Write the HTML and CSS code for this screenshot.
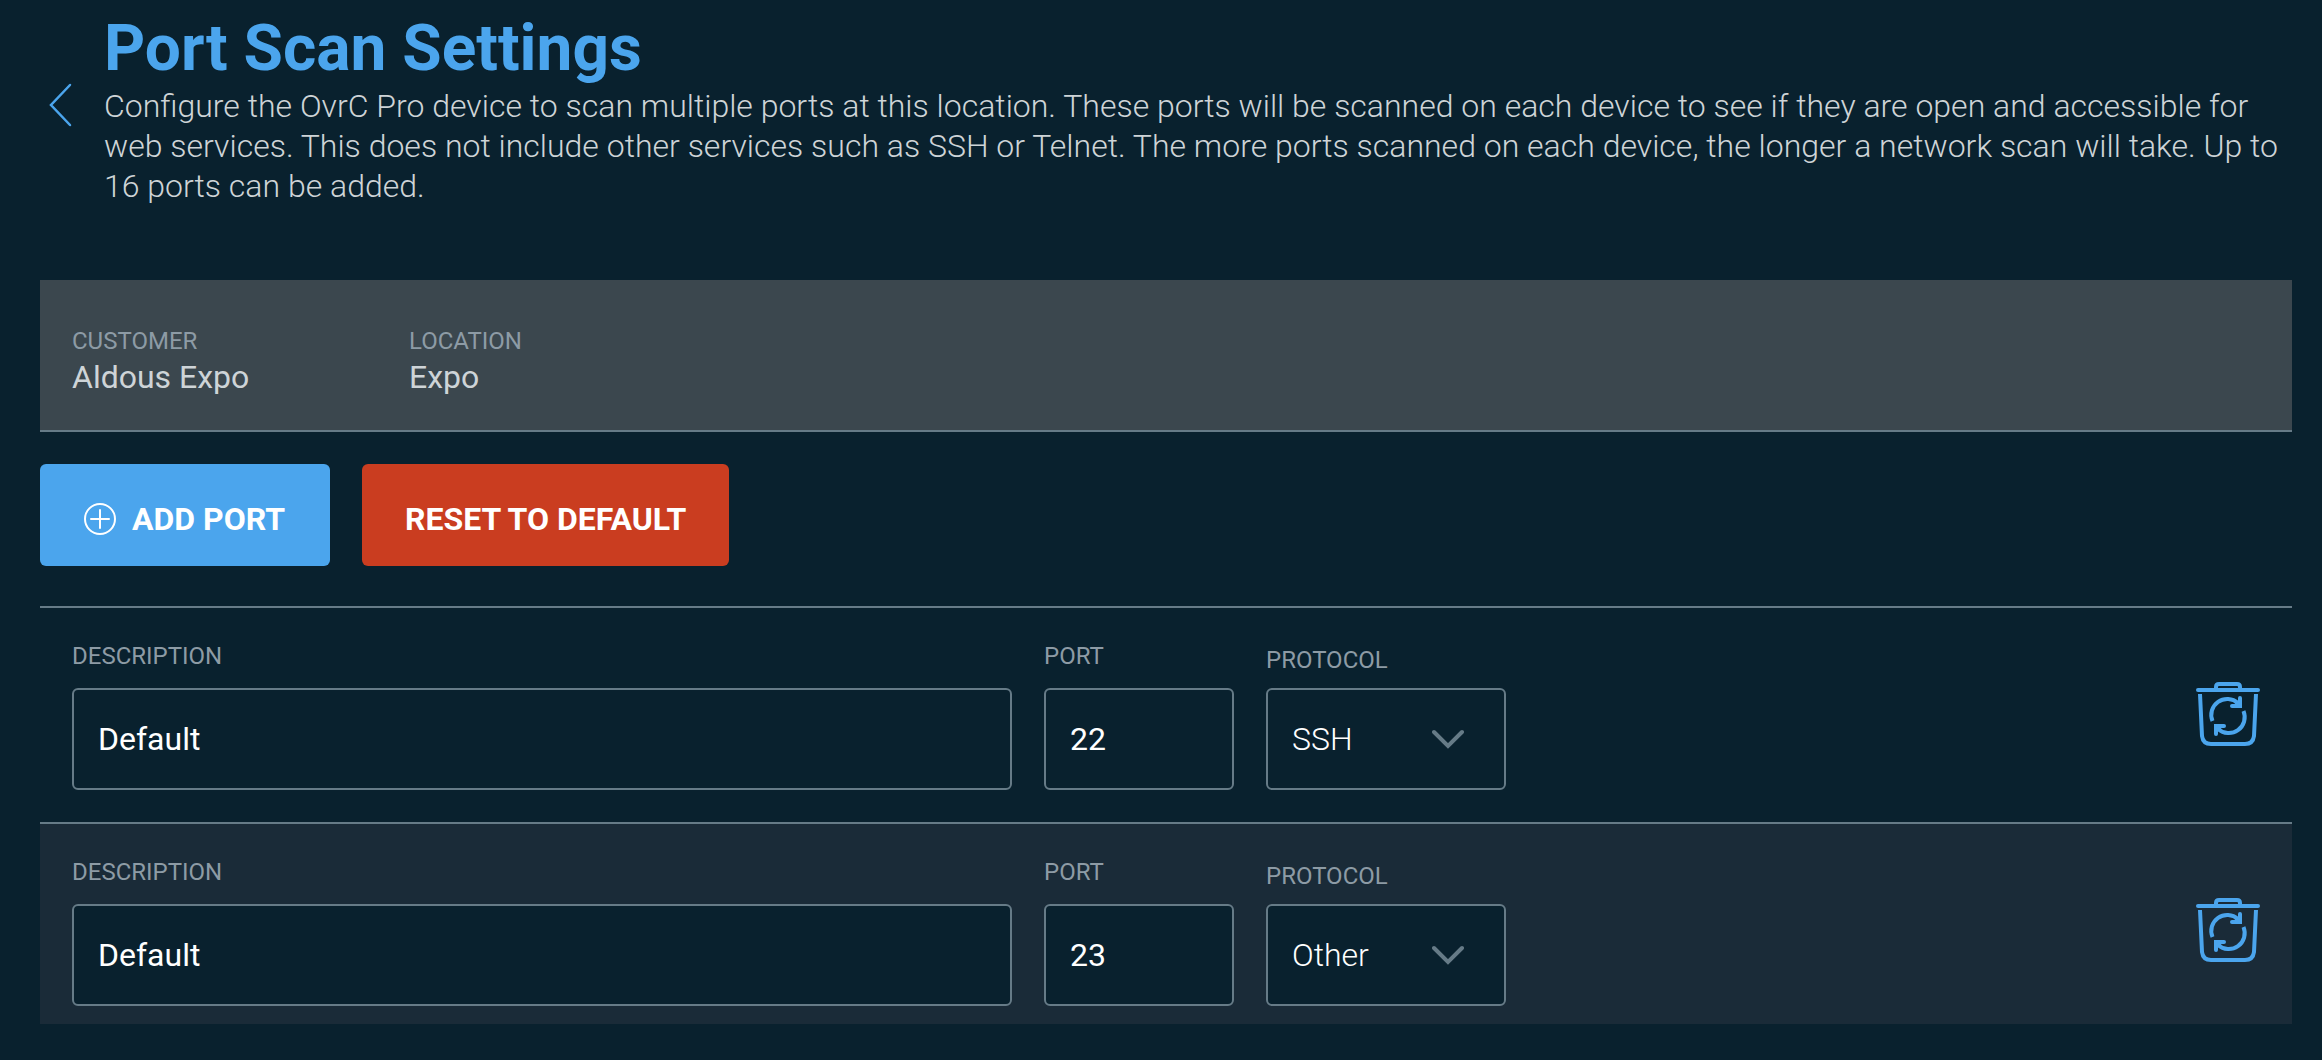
FILE: index.html
```html
<!DOCTYPE html>
<html lang="en">
<head>
  <meta charset="UTF-8" />
  <meta name="viewport" content="width=device-width, initial-scale=1" />
  <title>Port Scan Settings</title>
  <link rel="stylesheet" href="styles.css">
</head>
<body>
  <!-- Shared icons -->
  <svg class="sprite" aria-hidden="true">
    <symbol id="icon-chevron" viewBox="0 0 32 20">
      <path d="M2 3 L16 17 L30 3" fill="none" stroke="currentColor" stroke-width="4" stroke-linecap="round" />
    </symbol>
    <symbol id="icon-trash" viewBox="0 0 64 64">
      <g fill="none" stroke="currentColor" stroke-width="4">
        <path d="M2 8 H62" stroke-linecap="round" />
        <path d="M20 8 V5 Q20 2 23 2 H41 Q44 2 44 5 V8" />
        <path d="M4 12 L6 54 Q7 62 15 62 H49 Q57 62 58 54 L60 12" />
        <path d="M16.500 39 A16 16 0 0 1 42 21" />
        <path d="M47.500 29 A16 16 0 0 1 22 47" />
        <path d="M44 16 V24 H36 M20 52 V44 H28" stroke-linecap="round" />
      </g>
      <path d="M44 18 V24 H37 L40 20 Z M20 50 V44 H27 L24 48 Z" fill="currentColor" />
    </symbol>
  </svg>

  <header class="page-header">
    <a class="back" href="#" aria-label="Back">
      <svg width="24" height="44" viewBox="0 0 24 44">
        <path d="M22 2 L3 22 L22 42" fill="none" stroke="currentColor" stroke-width="2.500" stroke-linecap="round" />
      </svg>
    </a>
    <div class="intro">
      <h1>Port Scan Settings</h1>
      <p>Configure the OvrC Pro device to scan multiple ports at this location. These ports will be scanned on each device to see if they are open and accessible for web services. This does not include other services such as SSH or Telnet. The more ports scanned on each device, the longer a network scan will take. Up to 16 ports can be added.</p>
    </div>
  </header>

  <main>
    <dl class="summary">
      <div class="summary-item">
        <dt>CUSTOMER</dt>
        <dd>Aldous Expo</dd>
      </div>
      <div class="summary-item">
        <dt>LOCATION</dt>
        <dd>Expo</dd>
      </div>
    </dl>

    <div class="actions">
      <button type="button" class="btn btn-add">
        <svg width="32" height="32" viewBox="0 0 32 32" aria-hidden="true">
          <g fill="none" stroke="currentColor" stroke-width="2">
            <circle cx="16" cy="16" r="15" />
            <path d="M16 7 V25 M7 16 H25" stroke-linecap="round" />
          </g>
        </svg>
        ADD PORT
      </button>
      <button type="button" class="btn btn-reset">RESET TO DEFAULT</button>
    </div>

    <form class="ports">
      <div class="port-row">
        <div class="field field-description">
          <label for="description1">DESCRIPTION</label>
          <input id="description1" type="text" value="Default">
        </div>
        <div class="field field-port">
          <label for="port1">PORT</label>
          <input id="port1" type="text" inputmode="numeric" value="22">
        </div>
        <div class="field field-protocol">
          <label for="protocol1">PROTOCOL</label>
          <div class="select">
            <select id="protocol1">
              <option selected>SSH</option>
              <option>Other</option>
            </select>
            <svg class="chevron" aria-hidden="true"><use href="#icon-chevron" /></svg>
          </div>
        </div>
        <button type="button" class="btn-delete" aria-label="Reset port 22">
          <svg class="trash" aria-hidden="true"><use href="#icon-trash" /></svg>
        </button>
      </div>

      <div class="port-row">
        <div class="field field-description">
          <label for="description2">DESCRIPTION</label>
          <input id="description2" type="text" value="Default">
        </div>
        <div class="field field-port">
          <label for="port2">PORT</label>
          <input id="port2" type="text" inputmode="numeric" value="23">
        </div>
        <div class="field field-protocol">
          <label for="protocol2">PROTOCOL</label>
          <div class="select">
            <select id="protocol2">
              <option>SSH</option>
              <option selected>Other</option>
            </select>
            <svg class="chevron" aria-hidden="true"><use href="#icon-chevron" /></svg>
          </div>
        </div>
        <button type="button" class="btn-delete" aria-label="Reset port 23">
          <svg class="trash" aria-hidden="true"><use href="#icon-trash" /></svg>
        </button>
      </div>
    </form>
  </main>
</body>
</html>
```
FILE: styles.css
```css
* {
  box-sizing: border-box;
}
body {
  margin: 0;
  padding: 12px 30px 36px 40px;
  background-color: #09212e;
  color: #ced4d7;
  font-family: Roboto, sans-serif;
  font-size: 32px;
  line-height: 40px;
}
.sprite {
  display: none;
}

/* Header */
.page-header {
  display: flex;
  align-items: center;
  margin-bottom: 74px;
}
.back {
  flex: none;
  display: flex;
  width: 64px;
  padding: 0 8px 8px;
  color: #4ba5ed;
}
h1 {
  margin: 0;
  color: #4ba5ed;
  font-size: 64px;
  font-weight: 700;
  line-height: 74px;
}
.intro p {
  margin: 0;
  font-weight: 300;
}

/* Customer and location */
.summary {
  display: flex;
  margin: 0 0 32px;
  padding: 41px 32px 33px;
  background-color: #3b474e;
  border-bottom: 2px solid #667b87;
}
.summary-item {
  width: 337px;
}
dt,
label {
  color: #8d9ba5;
  font-size: 24px;
  line-height: 32px;
}
dt {
  padding-top: 4px;
}
dd {
  margin: 0;
}

/* Buttons */
.actions {
  display: flex;
  gap: 32px;
  margin-bottom: 40px;
}
.btn {
  display: flex;
  align-items: center;
  gap: 16px;
  height: 102px;
  padding: 8px 44px 0;
  border: none;
  border-radius: 6px;
  color: #fff;
  font-family: inherit;
  font-size: 32px;
  font-weight: 700;
  cursor: pointer;
}
.btn-add {
  min-width: 290px;
  background-color: #4ba5ed;
}
.btn-reset {
  padding-right: 43px;
  padding-left: 43px;
  background-color: #ca3d20;
}

/* Port list */
.port-row {
  display: flex;
  align-items: flex-end;
  gap: 32px;
  padding: 32px;
  border-top: 2px solid #667b87;
}
.port-row:nth-child(even) {
  background-color: #1a2b38;
}
.port-row:last-child {
  padding-bottom: 18px;
}
.field {
  display: flex;
  flex-direction: column;
  gap: 16px;
}
.field-description {
  flex: 0 1 940px;
}
.field-port {
  width: 190px;
}
.field-protocol {
  width: 240px;
  gap: 12px;
}
input,
select {
  width: 100%;
  height: 102px;
  padding: 0 24px;
  background-color: #09212e;
  border: 2px solid #667b87;
  border-radius: 6px;
  color: #fff;
  font-family: inherit;
  font-size: 32px;
}
select {
  appearance: none;
  font-weight: 300;
}
.select {
  position: relative;
}
.chevron {
  position: absolute;
  top: 41px;
  right: 42px;
  width: 32px;
  height: 20px;
  color: #667b87;
  pointer-events: none;
}
.btn-delete {
  align-self: flex-start;
  margin-top: 42px;
  margin-left: auto;
  padding: 0;
  background: none;
  border: none;
  color: #4ba5ed;
  cursor: pointer;
}
.trash {
  display: block;
  width: 64px;
  height: 64px;
}
```
